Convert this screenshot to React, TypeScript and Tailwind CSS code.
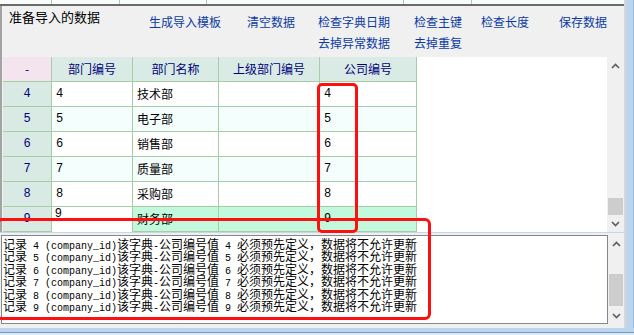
import React from "react";

const CJK = { fontFamily: '"Noto Sans CJK SC", sans-serif' };
const MONO = { fontFamily: '"Liberation Mono", "Noto Sans CJK SC", monospace' };

function Chevron({ up }: { up: boolean }) {
  return (
    <svg width="9" height="6" viewBox="0 0 9 6">
      <polyline
        points={up ? "1,5 4.5,1.5 8,5" : "1,1 4.5,4.5 8,1"}
        fill="none"
        stroke="#5f5f5f"
        strokeWidth="1.7"
      />
    </svg>
  );
}

function Scrollbar({ spacer, thumb, width }: { spacer: number; thumb: number; width: string }) {
  return (
    <div className={`flex flex-col ${width} bg-[#f0f0f0]`}>
      <div className="h-[17px] flex items-center justify-center">
        <Chevron up={true} />
      </div>
      <div style={{ height: spacer }} />
      <div className="bg-[#cdcdcd] mx-[1px]" style={{ height: thumb }} />
      <div className="flex-1" />
      <div className="h-[17px] flex items-center justify-center">
        <Chevron up={false} />
      </div>
    </div>
  );
}

const rows = [
  { n: "4", c1: "4", c2: "技术部" },
  { n: "5", c1: "5", c2: "电子部" },
  { n: "6", c1: "6", c2: "销售部" },
  { n: "7", c1: "7", c2: "质量部" },
  { n: "8", c1: "8", c2: "采购部" },
  { n: "9", c1: "9", c2: "财务部" },
];

function GridRow({ r, i }: { r: (typeof rows)[number]; i: number }) {
  const last = i === rows.length - 1;
  const bg = last ? "bg-[#c2f9dc]" : i % 2 === 1 ? "bg-[#f4fffd]" : "bg-white";
  const cell = "h-[25px] border-r border-b border-[#a6cda6] flex items-center";
  return (
    <div className="flex text-[12px] text-black">
      <div className={`${cell} w-[49px] bg-[#d9e9e3] justify-center text-[#000080] text-[12px]`} style={MONO}>
        {r.n}
      </div>
      {last ? (
        <div className="h-[25px] w-[81px] border-r border-[#a6cda6] bg-white pl-[3px] text-[12px] leading-[12px]" style={{ fontFamily: '"Liberation Sans", sans-serif' }}>
          {r.c1}
        </div>
      ) : (
        <div className={`${cell} w-[81px] ${bg} pl-[4px]`} style={MONO}>
          {r.c1}
        </div>
      )}
      <div className={`${cell} w-[86px] ${bg} pl-[4px]`} style={CJK}>
        {r.c2}
      </div>
      <div className={`${cell} w-[101px] ${bg}`} />
      <div className={`${cell} w-[97px] ${bg} pl-[4px]`} style={MONO}>
        {r.n}
      </div>
    </div>
  );
}

function MemoLine({ n }: { n: string }) {
  return (
    <div className="whitespace-pre h-[12.4px] leading-[12.4px] text-[12px] text-black" style={CJK}>
      <span>记录</span>
      <span className="text-[10px]" style={MONO}>{` ${n} (company_id)`}</span>
      <span>该字典</span>
      <span className="text-[10px]" style={MONO}>-</span>
      <span>公司编号值</span>
      <span className="text-[10px]" style={MONO}>{` ${n} `}</span>
      <span>必须预先定义，数据将不允许更新</span>
    </div>
  );
}

export default function App() {
  const link = "text-[#0b3aa8] text-[12px] whitespace-nowrap";
  const hcell = "h-[25px] border-r border-b border-[#a6cda6] flex items-center justify-center text-[12px] text-[#000080]";
  return (
    <div className="relative w-[634px] h-[335px] overflow-hidden bg-[#f0f0f0] flex flex-col">
      <div className="flex h-[328px]">
        <div className="w-[624px] flex flex-col">
          {/* top strip: remnants of another grid */}
          <div className="h-[4px] flex bg-[#f8fcfa]">
            <div className="w-[52px] border-r border-[#a6cda6]" />
            <div className="w-[68px] border-r border-[#a6cda6]" />
            <div className="w-[87px] border-r border-[#a6cda6]" />
            <div className="w-[197px] border-r border-[#a6cda6]" />
            <div className="w-[68px] border-r border-[#a6cda6]" />
            <div className="flex-1" />
          </div>
          <div className="h-[2px] bg-[#6b6b6b]" />
          <div className="flex flex-col border-l-[2px] border-[#a3a3a3] pl-[1px]">
            {/* toolbar */}
            <div className="h-[51px] flex" style={CJK}>
              <div className="w-[146px] pl-[6px] pt-[3px] text-[13px] leading-[16px] text-black">准备导入的数据</div>
              <div className="flex flex-col pt-[5px] leading-[21px]">
                <div className="flex">
                  <span className={`${link} w-[98px]`}>生成导入模板</span>
                  <span className={`${link} w-[71px]`}>清空数据</span>
                  <span className={`${link} w-[96px]`}>检查字典日期</span>
                  <span className={`${link} w-[67px]`}>检查主键</span>
                  <span className={`${link} w-[78px]`}>检查长度</span>
                  <span className={link}>保存数据</span>
                </div>
                <div className="flex pl-[169px]">
                  <span className={`${link} w-[96px]`}>去掉异常数据</span>
                  <span className={link}>去掉重复</span>
                </div>
              </div>
            </div>
            {/* grid */}
            <div className="h-[175px] flex">
              <div className="w-[604px] bg-white overflow-hidden">
                <div className="flex" style={CJK}>
                  <div className={`${hcell} w-[49px] bg-[#f4e4ee]`}>-</div>
                  <div className={`${hcell} w-[81px] bg-[#d9ebe4]`}>部门编号</div>
                  <div className={`${hcell} w-[86px] bg-[#d9ebe4]`}>部门名称</div>
                  <div className={`${hcell} w-[101px] bg-[#d9ebe4]`}>上级部门编号</div>
                  <div className={`${hcell} w-[97px] bg-[#d9ebe4]`}>公司编号</div>
                </div>
                {rows.map((r, i) => (
                  <GridRow key={r.n} r={r} i={i} />
                ))}
              </div>
              <Scrollbar spacer={124} thumb={17} width="w-[17px]" />
            </div>
          </div>
          <div className="h-[1px] bg-[#c8d6e2]" />
          <div className="h-[2px]" />
          {/* memo */}
          <div className="h-[89px] flex pl-[1px]">
            <div className="w-[607px] border border-[#828790] bg-white pl-[1px] pt-[2px] overflow-hidden">
              {rows.map((r) => (
                <MemoLine key={r.n} n={r.n} />
              ))}
            </div>
            <Scrollbar spacer={22} thumb={32} width="w-[16px]" />
          </div>
        </div>
        <div className="w-[2px] bg-[#d6d6d6]" />
        <div className="w-[7px] bg-[#bcd4ec]" />
        <div className="w-[1px] bg-[#97b9de]" />
      </div>
      <div className="h-[4px] bg-[#bcd4ec]" />
      <div className="h-[1px] bg-[#6f9fc8]" />
      <div className="flex-1 bg-[#dbe8f5]" />

      {/* red annotation rectangles */}
      <div className="absolute left-[317px] top-[83px] w-[41px] h-[150px] border-[3px] border-[#ff1010] rounded-[5px]" />
      <div className="absolute left-[-4px] top-[218px] w-[435px] h-[102px] border-[3px] border-[#ff1010] rounded-[6px]" />
    </div>
  );
}
